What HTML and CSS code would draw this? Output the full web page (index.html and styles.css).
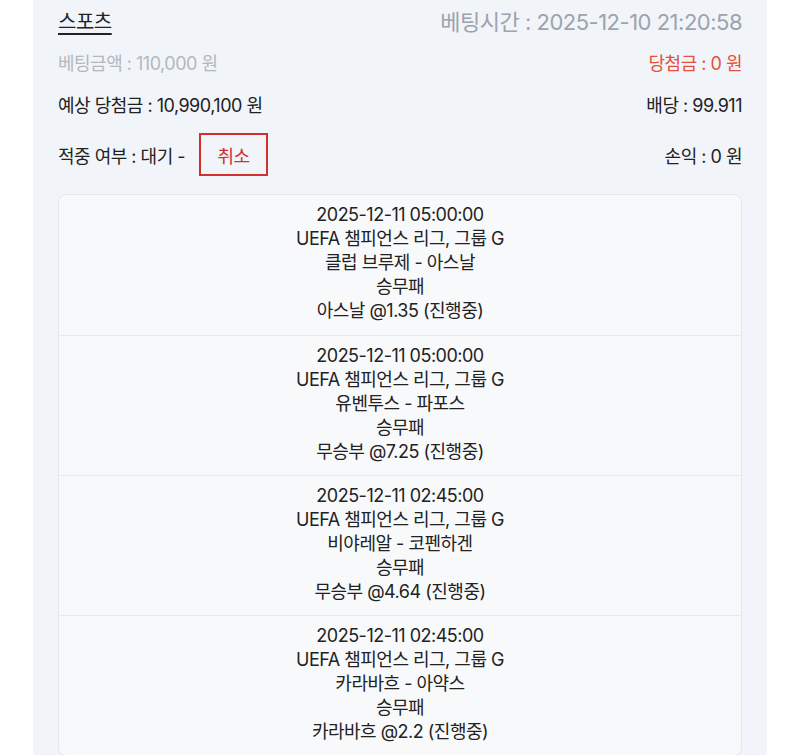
FILE: index.html
```html
<!DOCTYPE html>
<html lang="ko">
<head>
    <meta charset="UTF-8">
    <meta name="viewport" content="width=device-width, initial-scale=1.0">
    <title>베팅내역</title>
    <link rel="stylesheet" href="styles.css">
</head>
<body>
    <div class="panel">
        <div class="row row-head">
            <span class="category">스포츠</span>
            <span class="bet-time">베팅시간 : 2025-12-10 21:20:58</span>
        </div>
        <div class="row row-amount">
            <span class="muted">베팅금액 : 110,000 원</span>
            <span class="win">당첨금 : 0 원</span>
        </div>
        <div class="row row-expect">
            <span>예상 당첨금 : 10,990,100 원</span>
            <span>배당 : 99.911</span>
        </div>
        <div class="row row-result">
            <div class="result">
                <span>적중 여부 : 대기 -</span>
                <button class="cancel-btn">취소</button>
            </div>
            <span>손익 : 0 원</span>
        </div>

        <div class="games">
            <div class="game">
                <div>2025-12-11 05:00:00</div>
                <div>UEFA 챔피언스 리그, 그룹 G</div>
                <div>클럽 브루제 - 아스날</div>
                <div>승무패</div>
                <div>아스날 @1.35 (진행중)</div>
            </div>
            <div class="game">
                <div>2025-12-11 05:00:00</div>
                <div>UEFA 챔피언스 리그, 그룹 G</div>
                <div>유벤투스 - 파포스</div>
                <div>승무패</div>
                <div>무승부 @7.25 (진행중)</div>
            </div>
            <div class="game">
                <div>2025-12-11 02:45:00</div>
                <div>UEFA 챔피언스 리그, 그룹 G</div>
                <div>비야레알 - 코펜하겐</div>
                <div>승무패</div>
                <div>무승부 @4.64 (진행중)</div>
            </div>
            <div class="game">
                <div>2025-12-11 02:45:00</div>
                <div>UEFA 챔피언스 리그, 그룹 G</div>
                <div>카라바흐 - 아약스</div>
                <div>승무패</div>
                <div>카라바흐 @2.2 (진행중)</div>
            </div>
        </div>
    </div>
</body>
</html>
```

FILE: styles.css
```css
body {
    font-family: Inter, "Noto Sans CJK KR", sans-serif;
    background-color: #ffffff;
    color: #222222;
    margin: 0;
    padding: 0;
}

.panel {
    width: 734px;
    margin: 0 33px;
    padding: 0 25px 0;
    box-sizing: border-box;
    background: #f1f4f9;
    font-size: 18px;
    letter-spacing: -0.5px;
}

.row {
    display: flex;
    justify-content: space-between;
    align-items: center;
}

.row-head {
    height: 40px;
}

.category {
    font-size: 20px;
    text-decoration: underline;
    text-underline-offset: 4px;
}

.bet-time {
    font-size: 22px;
    color: #9da3ac;
}

.row-amount {
    height: 44px;
}

.muted {
    color: #b3b8bf;
}

.win {
    color: #e4503a;
}

.row-expect {
    height: 40px;
}

.row-result {
    height: 43px;
    margin-top: 9px;
}

.result {
    display: flex;
    align-items: center;
}

.cancel-btn {
    margin-left: 14px;
    width: 69px;
    height: 43px;
    padding: 0;
    appearance: none;
    background: transparent;
    border: 2px solid #d32f2f;
    color: #d32f2f;
    font-family: inherit;
    font-size: 18px;
    letter-spacing: -0.4px;
    cursor: pointer;
}

.games {
    margin-top: 18px;
    background: #f8f9fb;
    border: 1px solid #e5e7eb;
    border-radius: 8px;
}

.game {
    height: 140px;
    box-sizing: border-box;
    padding: 8px 0 11px;
    text-align: center;
    line-height: 24px;
}

.game + .game {
    border-top: 1px solid #e6e8ec;
}
```
